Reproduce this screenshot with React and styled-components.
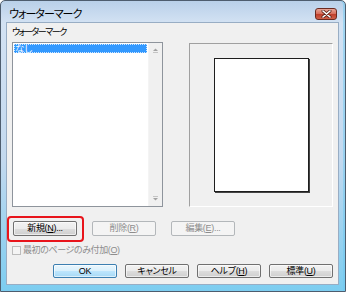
import React from "react";
import styled, { createGlobalStyle } from "styled-components";

const GlobalStyle = createGlobalStyle`
  html, body {
    margin: 0;
    padding: 0;
    background: #ffffff;
  }
  body {
    font-family: "Liberation Sans", "Noto Sans CJK JP", sans-serif;
    font-feature-settings: "palt" 1;
  }
`;

const Window = styled.div`
  box-sizing: border-box;
  width: 346px;
  height: 292px;
  display: flex;
  flex-direction: column;
  border: 1px solid #4e5d6e;
  border-radius: 5px 5px 0 0;
  background: linear-gradient(to bottom, #b9d0e9 0px, #d3e2f3 22px, #c3d9ef 55%, #7ccdf0 100%);
  box-shadow: inset -2px 0 0 rgba(110, 200, 240, 0.5);
`;

const TitleBar = styled.div`
  height: 21px;
  box-sizing: border-box;
  display: flex;
  align-items: flex-start;
  justify-content: space-between;
  padding: 6px 8px 0 8px;
`;

const Title = styled.span`
  font-size: 11px;
  line-height: 14px;
  letter-spacing: -1px;
  color: #000;
`;

const CloseButton = styled.div`
  width: 22px;
  height: 12px;
  margin-top: 1px;
  box-sizing: border-box;
  border: 1px solid #6b2a20;
  border-radius: 3px;
  background: linear-gradient(to bottom, #e9a698 0%, #d7715f 45%, #c0402c 55%, #d0604a 100%);
  display: flex;
  align-items: center;
  justify-content: center;
`;

const Client = styled.div`
  flex: 1;
  margin: 0 6px 6px 5px;
  box-sizing: border-box;
  border: 1px solid #98adc4;
  background: #f0f0f0;
  padding: 0 5px;
  display: flex;
  flex-direction: column;
  font-size: 9px;
  color: #000;
`;

const Label = styled.div`
  margin-top: 4px;
  height: 11px;
  line-height: 11px;
  letter-spacing: -1.5px;
`;

const Panels = styled.div`
  margin-top: 4px;
  height: 165px;
  display: flex;
  gap: 26px;
`;

const ListBox = styled.div`
  width: 151px;
  box-sizing: border-box;
  border: 1px solid #8e949c;
  background: #fff;
  display: flex;
`;

const ListItems = styled.div`
  flex: 1;
  padding: 1px;
`;

const ListItem = styled.div`
  height: 9px;
  line-height: 9px;
  padding-left: 1px;
  font-size: 9.5px;
  background: ${(p) => (p.$selected ? "#3399ff" : "transparent")};
  color: ${(p) => (p.$selected ? "#fff" : "#000")};
  outline: ${(p) => (p.$selected ? "1px dotted #cfe6ff" : "none")};
  outline-offset: -1px;
`;

const ScrollBar = styled.div`
  width: 13px;
  background: #f0f0f0;
  border-left: 1px solid #f4f4f4;
  display: flex;
  flex-direction: column;
  justify-content: space-between;
  align-items: center;
  padding: 5px 0 5px;
`;

const Preview = styled.div`
  flex: 1;
  margin-top: 1px;
  box-sizing: border-box;
  border-top: 1px solid #a0a0a0;
  border-left: 1px solid #a0a0a0;
  border-right: 1px solid #ffffff;
  border-bottom: 1px solid #ffffff;
  background: #f0f0f0;
  display: flex;
  align-items: center;
  justify-content: center;
`;

const Page = styled.div`
  width: 95px;
  height: 134px;
  box-sizing: border-box;
  background: #fff;
  border: 1px solid #1e1e1e;
  box-shadow: 1px 1px 0 #444;
`;

const ButtonRow = styled.div`
  margin-top: ${(p) => p.$top}px;
  display: flex;
  justify-content: ${(p) => (p.$end ? "flex-end" : "flex-start")};
  gap: ${(p) => p.$gap}px;
  padding-left: ${(p) => p.$indent || 0}px;
`;

const Button = styled.div`
  width: 64px;
  height: ${(p) => p.$h || 15}px;
  box-sizing: border-box;
  border: 1px solid ${(p) => (p.$disabled ? "#b3b7ba" : p.$default ? "#3c7fb1" : "#707070")};
  border-radius: 2px;
  background: ${(p) =>
    p.$disabled
      ? "#f4f4f4"
      : p.$default
      ? "linear-gradient(to bottom, #eaf6fd 0%, #d9f0fc 50%, #bee6fd 51%, #a7d9f5 100%)"
      : "linear-gradient(to bottom, #f2f2f2 0%, #ebebeb 50%, #dddddd 51%, #cfcfcf 100%)"};
  box-shadow: ${(p) => (p.$disabled ? "none" : "inset 0 0 0 1px rgba(255,255,255,0.6)")};
  color: ${(p) => (p.$disabled ? "#8d8d8d" : "#000")};
  display: flex;
  align-items: center;
  justify-content: center;
  font-size: 9px;
  line-height: 9px;
  letter-spacing: -0.3px;
  white-space: nowrap;
`;

const Highlight = styled.div`
  position: relative;
  &::after {
    content: "";
    position: absolute;
    left: -6px;
    top: -5px;
    right: -7px;
    bottom: -6px;
    border: 2px solid #e8141b;
    border-radius: 4px;
    pointer-events: none;
  }
`;

const CheckRow = styled.div`
  margin-top: 9px;
  height: 11px;
  display: flex;
  align-items: center;
  gap: 2px;
  color: #8d8d8d;
  line-height: 11px;
  letter-spacing: -0.4px;
`;

const CheckBox = styled.div`
  width: 9px;
  height: 9px;
  box-sizing: border-box;
  border: 1px solid #bcbcbc;
  background: #f4f4f4;
`;

const Arrow = ({ up }) => (
  <svg width="7" height="5" viewBox="0 0 7 5">
    {up ? (
      <>
        <path d="M1 3 L3.5 0.5 L6 3 Z" fill="#a3a3a3" />
        <rect x="1" y="4" width="5" height="1" fill="#c4c4c4" />
      </>
    ) : (
      <>
        <rect x="1" y="0" width="5" height="1" fill="#c4c4c4" />
        <path d="M1 2 L3.5 4.5 L6 2 Z" fill="#a3a3a3" />
      </>
    )}
  </svg>
);

const CloseGlyph = () => (
  <svg width="11" height="8" viewBox="0 0 11 8">
    <path d="M2 1 L9 7 M9 1 L2 7" stroke="#5a2018" strokeWidth="3" strokeLinecap="round" />
    <path d="M2 1 L9 7 M9 1 L2 7" stroke="#ffffff" strokeWidth="1.6" strokeLinecap="round" />
  </svg>
);

export default function App() {
  return (
    <>
      <GlobalStyle />
      <Window>
        <TitleBar>
          <Title>ウォーターマーク</Title>
          <CloseButton>
            <CloseGlyph />
          </CloseButton>
        </TitleBar>
        <Client>
          <Label>ウォーターマーク</Label>
          <Panels>
            <ListBox>
              <ListItems>
                <ListItem $selected>なし</ListItem>
              </ListItems>
              <ScrollBar>
                <Arrow up />
                <Arrow />
              </ScrollBar>
            </ListBox>
            <Preview>
              <Page />
            </Preview>
          </Panels>
          <ButtonRow $top={14} $gap={15} $indent={1}>
            <Highlight>
              <Button>
                新規(<u>N</u>)...
              </Button>
            </Highlight>
            <Button $disabled>
              削除(<u>R</u>)
            </Button>
            <Button $disabled>
              編集(<u>E</u>)...
            </Button>
          </ButtonRow>
          <CheckRow>
            <CheckBox />
            <span>
              最初のページのみ付加(<u>O</u>)
            </span>
          </CheckRow>
          <ButtonRow $top={8} $gap={8} $end>
            <Button $default $h={14}>
              OK
            </Button>
            <Button $h={14}>キャンセル</Button>
            <Button $h={14}>
              ヘルプ(<u>H</u>)
            </Button>
            <Button $h={14}>
              標準(<u>U</u>)
            </Button>
          </ButtonRow>
        </Client>
      </Window>
    </>
  );
}
